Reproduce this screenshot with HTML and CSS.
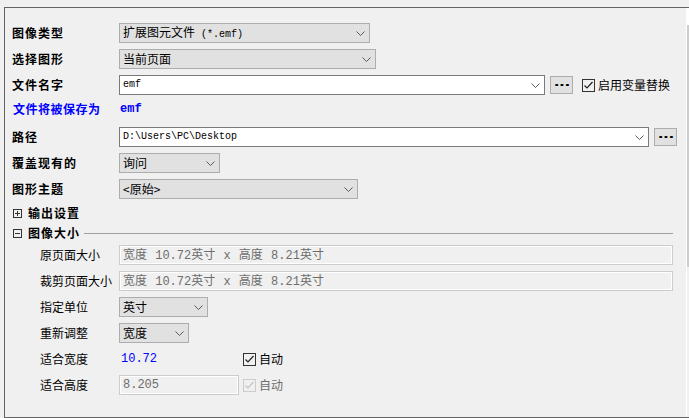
FILE: index.html
```html
<!DOCTYPE html>
<html lang="zh-CN">
<head>
<meta charset="utf-8">
<title>导出图像</title>
<link rel="stylesheet" href="styles.css">
</head>
<body>
<div class="frame">
  <div class="content">
    <div class="row">
      <div class="lbl b">图像类型</div>
      <div class="combo w-type"><span class="t">扩展图元文件<span class="m10"> (*.emf)</span></span><svg class="chev" width="9" height="5" viewBox="0 0 9 5"><polyline points="0.5,0.5 4.5,4.5 8.5,0.5"/></svg></div>
    </div>
    <div class="row">
      <div class="lbl b">选择图形</div>
      <div class="combo w-graph"><span class="t">当前页面</span><svg class="chev" width="9" height="5" viewBox="0 0 9 5"><polyline points="0.5,0.5 4.5,4.5 8.5,0.5"/></svg></div>
    </div>
    <div class="row">
      <div class="lbl b">文件名字</div>
      <div class="edit w-name"><span class="t m10">emf</span><svg class="chev" width="9" height="5" viewBox="0 0 9 5"><polyline points="0.5,0.5 4.5,4.5 8.5,0.5"/></svg></div>
      <div class="btn"><span class="dots">...</span></div>
      <div class="chk on"><svg width="11" height="11" viewBox="0 0 11 11"><polyline points="1.5,5.5 4,8 9.5,2"/></svg></div>
      <div class="chk-lbl">启用变量替换</div>
    </div>
    <div class="row row-save">
      <div class="lbl blue save">文件将被保存为</div>
      <div class="blue m12b">emf</div>
    </div>
    <div class="row">
      <div class="lbl b">路径</div>
      <div class="edit w-path"><span class="t m10">D:\Users\PC\Desktop</span><svg class="chev" width="9" height="5" viewBox="0 0 9 5"><polyline points="0.5,0.5 4.5,4.5 8.5,0.5"/></svg></div>
      <div class="btn"><span class="dots">...</span></div>
    </div>
    <div class="row">
      <div class="lbl b">覆盖现有的</div>
      <div class="combo w-over"><span class="t">询问</span><svg class="chev" width="9" height="5" viewBox="0 0 9 5"><polyline points="0.5,0.5 4.5,4.5 8.5,0.5"/></svg></div>
    </div>
    <div class="row row-theme">
      <div class="lbl b">图形主题</div>
      <div class="combo w-theme"><span class="t">&lt;原始&gt;</span><svg class="chev" width="9" height="5" viewBox="0 0 9 5"><polyline points="0.5,0.5 4.5,4.5 8.5,0.5"/></svg></div>
    </div>
    <div class="row group">
      <svg class="tog" width="9" height="9" viewBox="0 0 9 9"><rect x="0.5" y="0.5" width="8" height="8"/><line x1="2" y1="4.5" x2="7" y2="4.5"/><line x1="4.5" y1="2" x2="4.5" y2="7"/></svg>
      <div class="b">输出设置</div>
    </div>
    <div class="row group group-open">
      <svg class="tog" width="9" height="9" viewBox="0 0 9 9"><rect x="0.5" y="0.5" width="8" height="8"/><line x1="2" y1="4.5" x2="7" y2="4.5"/></svg>
      <div class="b">图像大小</div>
      <div class="gline"></div>
    </div>
    <div class="sub">
      <div class="row">
        <div class="lbl2">原页面大小</div>
        <div class="dis w-size"><span class="t">宽度<span class="m12"> 10.72</span>英寸<span class="m12"> x </span>高度<span class="m12"> 8.21</span>英寸</span></div>
      </div>
      <div class="row">
        <div class="lbl2">裁剪页面大小</div>
        <div class="dis w-size"><span class="t">宽度<span class="m12"> 10.72</span>英寸<span class="m12"> x </span>高度<span class="m12"> 8.21</span>英寸</span></div>
      </div>
      <div class="row">
        <div class="lbl2">指定单位</div>
        <div class="combo w-unit"><span class="t">英寸</span><svg class="chev" width="9" height="5" viewBox="0 0 9 5"><polyline points="0.5,0.5 4.5,4.5 8.5,0.5"/></svg></div>
      </div>
      <div class="row">
        <div class="lbl2">重新调整</div>
        <div class="combo w-fit"><span class="t">宽度</span><svg class="chev" width="9" height="5" viewBox="0 0 9 5"><polyline points="0.5,0.5 4.5,4.5 8.5,0.5"/></svg></div>
      </div>
      <div class="row">
        <div class="lbl2">适合宽度</div>
        <div class="val blue m12">10.72</div>
        <div class="chk on small-gap"><svg width="11" height="11" viewBox="0 0 11 11"><polyline points="1.5,5.5 4,8 9.5,2"/></svg></div>
        <div class="chk-lbl">自动</div>
      </div>
      <div class="row">
        <div class="lbl2">适合高度</div>
        <div class="dis w-val"><span class="t m12">8.205</span></div>
        <div class="chk on disabled small-gap"><svg width="11" height="11" viewBox="0 0 11 11"><polyline points="1.5,5.5 4,8 9.5,2"/></svg></div>
        <div class="chk-lbl grey">自动</div>
      </div>
    </div>
  </div>
  <div class="scroll"><div class="s-top"></div><div class="s-thumb"></div></div>
</div>
</body>
</html>
```

FILE: styles.css
```css
* { box-sizing: border-box; }
html, body { margin: 0; padding: 0; }
body {
  background: #f0f0f0;
  font-family: "Noto Sans CJK SC", "Liberation Sans", sans-serif;
  font-size: 12px;
  color: #000;
  width: 689px;
  height: 418px;
  overflow: hidden;
}
.frame {
  margin: 7px 0 0 4px;
  width: 685px;
  height: 411px;
  border: 1px solid #646464;
  border-right: none;
  display: flex;
}
.content {
  flex: 1;
  padding: 15px 0 0 7px;
}
.scroll {
  width: 3px;
  flex: none;
  display: flex;
  flex-direction: column;
  background: linear-gradient(to right, #fff 1px, #f0f0f0 1px);
}
.s-top { height: 17px; background: #fff; }
.s-thumb { height: 242px; background: linear-gradient(to right, #fff 1px, #cdcdcd 1px); }

.row {
  display: flex;
  align-items: center;
  height: 20px;
  margin-bottom: 6px;
  line-height: 16px;
  white-space: nowrap;
}
.lbl { width: 107px; flex: none; }
.b { font-weight: 700; letter-spacing: 1px; }
.blue { color: #0000ff; }
.save { font-weight: 700; letter-spacing: 0.5px; padding-left: 1px; }
.row-save { height: 16px; margin-bottom: 10px; }
.row-theme { margin-bottom: 4px; }

.t { white-space: pre; }
.m10 { font-family: "Liberation Mono", monospace; font-size: 10px; }
.m12 { font-family: "Liberation Mono", monospace; font-size: 12px; word-spacing: 1px; }
.m12b { font-family: "Liberation Mono", monospace; font-size: 12px; font-weight: 700; padding-left: 1px; }

.combo, .edit, .dis {
  height: 20px;
  flex: none;
  display: flex;
  align-items: center;
  padding-left: 3px;
}
.combo { background: #e1e1e1; border: 1px solid #adadad; }
.edit { background: #fff; border: 1px solid #7a7a7a; }
.dis {
  background: #f0f0f0;
  border: 1px solid #cccccc;
  box-shadow: inset 0 0 0 1px #fff;
  color: #6d6d6d;
}
.chev { margin-left: auto; margin-right: 4px; flex: none; }
.chev polyline { fill: none; stroke: #5a5a5a; stroke-width: 1; }

.w-type { width: 251px; }
.w-graph { width: 257px; }
.w-name { width: 426px; }
.w-path { width: 530px; }
.w-over { width: 101px; }
.w-theme { width: 239px; }
.w-size { width: 554px; }
.w-unit { width: 89px; }
.w-fit { width: 70px; }
.w-val { width: 120px; }

.btn {
  width: 23px;
  height: 18px;
  margin-left: 5px;
  flex: none;
  background: #e1e1e1;
  border: 1px solid #adadad;
  display: flex;
  justify-content: center;
  align-items: center;
  overflow: hidden;
}
.dots {
  font-family: "Liberation Sans", sans-serif;
  font-weight: 700;
  font-size: 12px;
  line-height: 12px;
  transform: translate(1px, -3px) scaleX(1.6);
}

.chk {
  width: 13px;
  height: 13px;
  flex: none;
  margin-left: 9px;
  border: 1px solid #333;
  background: #f0f0f0;
  display: flex;
  align-items: center;
  justify-content: center;
}
.chk polyline { fill: none; stroke: #222; stroke-width: 1.2; }
.chk.small-gap { margin-left: 4px; }
.chk.disabled { border-color: #cccccc; }
.chk.disabled polyline { stroke: #c4c4c4; }
.chk-lbl { margin-left: 3px; }
.grey { color: #6d6d6d; }

.group { height: 20px; margin-bottom: 0; }
.group-open { margin-bottom: 2px; }
.tog { flex: none; margin-left: 1px; margin-right: 6px; }
.tog rect, .tog line { fill: none; stroke: #333; stroke-width: 1; }
.gline {
  flex: none;
  width: 589px;
  height: 1px;
  background: #a0a0a0;
  margin-left: 4px;
}

.sub { padding-left: 28px; }
.lbl2 { width: 79px; flex: none; }
.val { width: 120px; flex: none; padding-left: 2px; }
```
